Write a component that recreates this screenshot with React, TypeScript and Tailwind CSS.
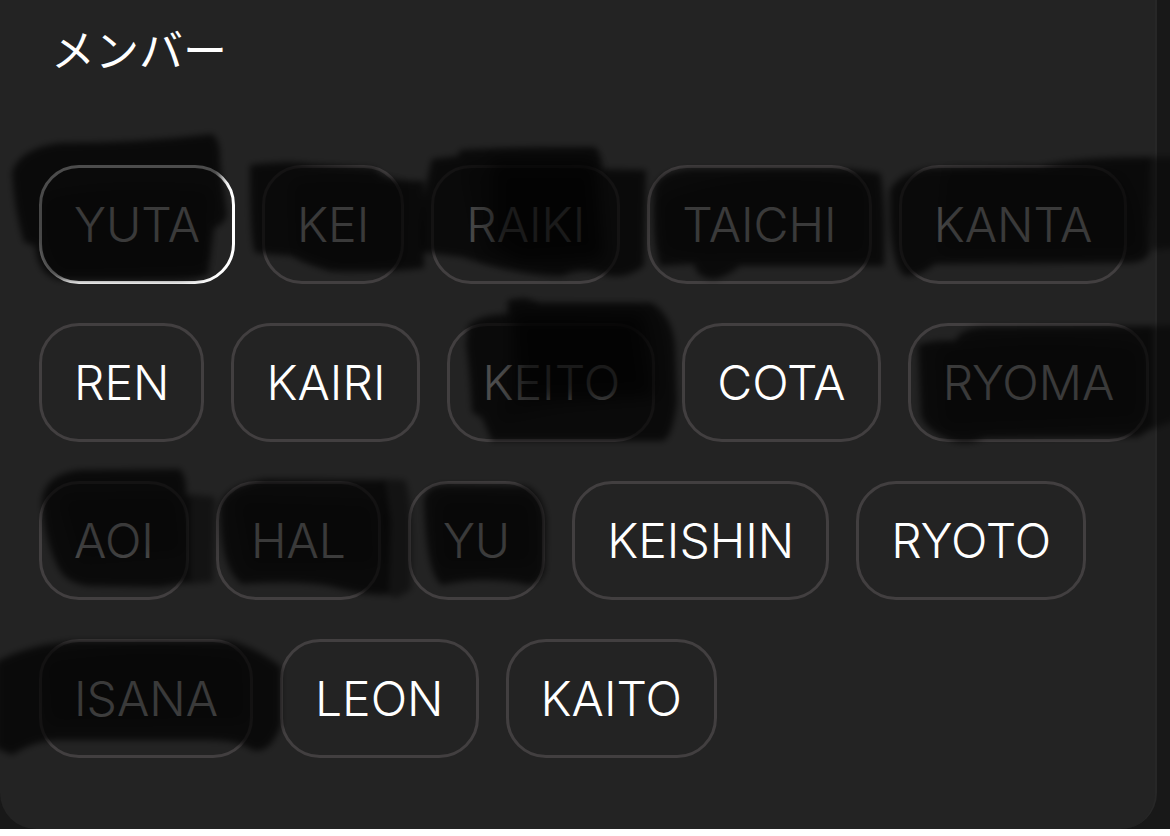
import React from 'react';
import clsx from 'clsx';

const rows = [
  ['YUTA', 'KEI', 'RAIKI', 'TAICHI', 'KANTA'],
  ['REN', 'KAIRI', 'KEITO', 'COTA', 'RYOMA'],
  ['AOI', 'HAL', 'YU', 'KEISHIN', 'RYOTO'],
  ['ISANA', 'LEON', 'KAITO'],
];

const strokes = [
  'M12 172 Q20 148 60 143 Q140 143 212 134 Q221 140 220 162 L227 215 Q224 225 214 228 L208 274 Q200 280 170 280 L60 280 Q38 276 35 246 L24 242 Q14 210 12 172Z',
  'M250 165 Q290 160 310 164 L375 168 Q382 182 424 181 L424 268 Q390 273 330 271 Q305 264 292 256 L256 253 Q250 250 250 165Z',
  'M432 159 L458 156 L460 150 Q500 147 595 147 Q601 152 602 169 L646 170 L644 266 Q625 280 606 275 Q580 266 562 276 Q520 276 462 257 L422 252 Q418 215 432 159Z',
  'M654 190 Q657 172 690 169 L850 169 L880 173 Q886 200 884 266 L740 266 Q728 276 715 279 Q697 279 694 264 L660 266 Q652 240 654 190Z',
  'M890 190 Q900 172 930 168 L1040 166 Q1080 157 1150 157 L1150 250 Q1148 262 1130 263 L935 264 Q920 277 905 276 Q888 262 890 190Z',
  'M468 326 Q480 314 508 314 L508 300 L525 298 L540 303 L652 303 Q672 316 675 345 L677 402 Q672 440 662 441 L492 441 L482 418 L472 412 Q470 370 466 345Z',
  'M918 345 Q935 339 955 341 Q960 328 985 327 L1152 326 L1152 428 L1138 437 L985 438 Q965 447 950 440 Q925 430 921 415Z',
  'M42 500 Q45 474 80 470 L180 469 Q187 478 186 493 L190 500 L190 582 L160 587 L90 586 Q66 584 58 567 Q44 540 42 500Z',
  'M220 506 Q224 486 265 479 L384 480 L390 520 L388 594 Q370 597 330 586 Q300 580 242 584 Q220 570 220 506Z',
  'M424 500 Q426 486 445 485 L525 486 Q543 492 546 520 L545 570 Q538 590 520 583 Q480 576 442 585 Q426 575 424 500Z',
  'M-4 662 Q30 644 75 641 L232 641 Q260 650 281 667 L281 725 Q270 755 252 750 Q240 739 200 740 L60 740 Q35 740 12 755 L-4 748Z',
];

// thinner coats where the marker ran off the end
const tails = [
  'M1148 157 L1176 157 L1176 248 L1152 250Z',
  'M1150 326 L1176 325 L1176 420 L1150 430Z',
  'M188 494 L215 497 L213 582 L188 584Z',
  'M382 479 L405 480 Q414 500 411 590 L396 598 L386 594Z',
];

const cores = [
  'M44 198 Q100 182 210 190 L206 268 L60 272 Q40 250 44 198Z',
  'M292 182 Q340 176 404 184 L402 262 L340 266 L294 250Z',
  'M464 168 Q520 156 598 166 L606 262 L560 272 L480 256Z',
  'M490 156 L596 156 L602 256 L520 262 L492 246Z',
  'M494 160 L596 160 L604 256 L520 262 L494 246Z',
  'M496 170 L594 170 L600 256 L520 260 L498 246Z',
  'M662 200 Q740 166 866 184 L866 254 L700 256 L664 250Z',
  'M946 170 L1120 174 Q1140 200 1138 250 L940 252Z',
  'M510 306 L646 308 Q662 330 660 398 L560 408 L500 420 Q512 360 510 306Z',
  'M512 316 L640 316 L650 390 L520 396Z',
  'M514 312 L640 314 L652 396 L520 400Z',
  'M514 320 L640 320 L650 396 L520 398Z',
  'M940 350 Q1040 336 1138 348 L1138 418 L944 426Z',
  'M62 498 L176 496 L182 552 L80 560Z',
  'M238 500 L372 504 L376 564 L250 566Z',
  'M440 500 L530 502 L532 562 L442 564Z',
  'M46 660 Q150 644 244 658 L246 720 L50 722Z',
];

function MarkerOverlay() {
  return (
    <svg
      aria-hidden="true"
      width="1170"
      height="829"
      viewBox="0 0 1170 829"
      className="pointer-events-none absolute left-0 top-0"
    >
      <defs>
        <filter id="edge" x="-10%" y="-10%" width="120%" height="120%">
          <feGaussianBlur stdDeviation="3" />
        </filter>
        <filter id="soft" x="-20%" y="-20%" width="140%" height="140%">
          <feGaussianBlur stdDeviation="7" />
        </filter>
      </defs>
      <g filter="url(#edge)">
        {strokes.map((d) => (
          <path key={d} d={d} fillOpacity="0.7" />
        ))}
        {tails.map((d) => (
          <path key={d} d={d} fillOpacity="0.45" />
        ))}
      </g>
      <g filter="url(#soft)">
        {cores.map((d) => (
          <path key={d} d={d} fillOpacity="0.24" />
        ))}
      </g>
    </svg>
  );
}

export default function App() {
  const [selected, setSelected] = React.useState('YUTA');

  return (
    <main className="relative overflow-hidden bg-[#181818] pr-[13px] font-['Inter','Noto_Sans_CJK_JP',sans-serif] text-white">
      <section className="rounded-b-[36px] border-r-2 border-[#272727] bg-[#232323] pb-[71px] pl-[39px] pt-[18px]">
        <h2 className="pl-3 font-['Noto_Sans_CJK_JP',sans-serif] text-[44px] font-normal leading-[60px]">
          メンバー
        </h2>

        <div className="mt-[87px] flex flex-col gap-[39px]">
          {rows.map((row) => (
            <div key={row[0]} className="flex gap-[27px]">
              {row.map((name) => (
                <button
                  key={name}
                  type="button"
                  aria-pressed={selected === name}
                  onClick={() => setSelected(name)}
                  className={clsx(
                    'h-[119px] shrink-0 rounded-[40px] border-3 px-8 text-[48px] font-light',
                    selected === name ? 'border-white' : 'border-[#423f40]'
                  )}
                >
                  {name}
                </button>
              ))}
            </div>
          ))}
        </div>
      </section>

      <MarkerOverlay />
    </main>
  );
}
